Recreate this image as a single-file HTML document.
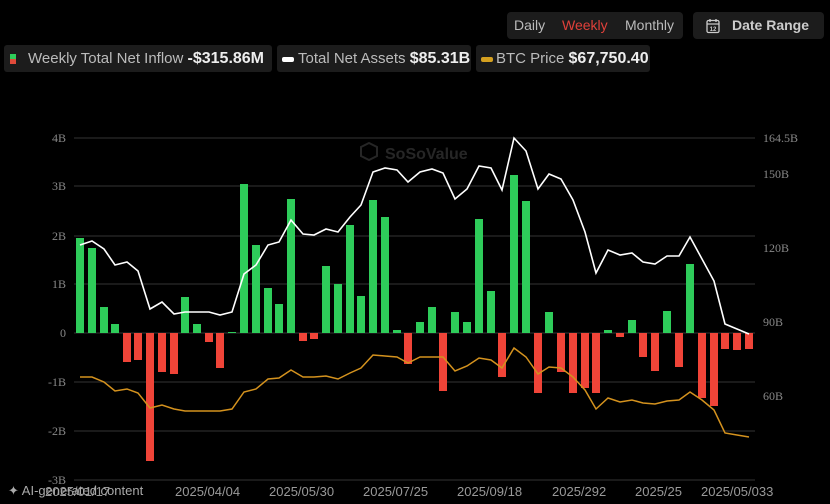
<!DOCTYPE html>
<html><head><meta charset="utf-8"><style>
body{margin:0;width:830px;height:504px;background:#000;overflow:hidden;font-family:"Liberation Sans",sans-serif;position:relative}
.grp{position:absolute;top:12px;left:507px;width:176px;height:27px;background:#1c1c1c;border-radius:4px;font-size:14px;color:#bbb;line-height:27px}
.grp span{position:absolute}
.dr{position:absolute;top:12px;left:693px;width:131px;height:27px;background:#1c1c1c;border-radius:4px;font-size:14px;color:#ccc;line-height:27px;font-weight:bold}
.lg{position:absolute;top:45px;height:27px;background:#1c1c1c;border-radius:3px;color:#bbb;line-height:27px;white-space:nowrap}
.lg .t{position:absolute;font-size:15px}
.lg b{color:#eee;font-size:16px}
</style></head><body>
<div class="grp"><span style="left:7px">Daily</span><span style="left:55px;color:#e0403a">Weekly</span><span style="left:118px">Monthly</span></div>
<div class="dr"><svg style="position:absolute;left:13px;top:6px" width="14" height="16" viewBox="0 0 14 16"><rect x="1" y="2.5" width="12" height="12" rx="1.5" fill="none" stroke="#ccc" stroke-width="1.3"/><line x1="1" y1="6" x2="13" y2="6" stroke="#ccc" stroke-width="1.2"/><line x1="4" y1="1" x2="4" y2="4" stroke="#ccc" stroke-width="1.3"/><line x1="10" y1="1" x2="10" y2="4" stroke="#ccc" stroke-width="1.3"/><text x="7" y="13" font-size="6" fill="#ccc" text-anchor="middle" font-family="Liberation Sans">12</text></svg><span style="position:absolute;left:39px">Date Range</span></div>
<div class="lg" style="left:4px;width:268px"><span style="position:absolute;left:6px;top:9px;width:6px;height:5px;background:#2ecc5a"></span><span style="position:absolute;left:6px;top:14px;width:6px;height:5px;background:#e04a3a"></span><span class="t" style="left:24px">Weekly Total Net Inflow <b>-$315.86M</b></span></div>
<div class="lg" style="left:277px;width:194px"><span style="position:absolute;left:5px;top:12px;width:12px;height:5px;border-radius:2px;background:#fff"></span><span class="t" style="left:21px">Total Net Assets <b>$85.31B</b></span></div>
<div class="lg" style="left:476px;width:174px"><span style="position:absolute;left:5px;top:12px;width:12px;height:5px;border-radius:2px;background:#d4a020"></span><span class="t" style="left:20px">BTC Price <b>$67,750.40</b></span></div>

<svg style="position:absolute;left:0;top:0" width="830" height="504">
<g stroke="#333" stroke-width="1">
<line x1="74" y1="138" x2="755" y2="138"/><line x1="74" y1="186" x2="755" y2="186"/><line x1="74" y1="236" x2="755" y2="236"/><line x1="74" y1="284" x2="755" y2="284"/><line x1="74" y1="333" x2="755" y2="333"/><line x1="74" y1="382" x2="755" y2="382"/><line x1="74" y1="431" x2="755" y2="431"/><line x1="74" y1="480" x2="755" y2="480"/>
</g>
<g font-family="Liberation Serif" font-size="12" fill="#888" text-anchor="end">
<text x="66" y="142">4B</text><text x="66" y="190">3B</text><text x="66" y="240">2B</text><text x="66" y="288">1B</text><text x="66" y="337">0</text><text x="66" y="386">-1B</text><text x="66" y="435">-2B</text><text x="66" y="484">-3B</text>
</g>
<g font-family="Liberation Serif" font-size="12" fill="#888">
<text x="763" y="142">164.5B</text><text x="763" y="178">150B</text><text x="763" y="252">120B</text><text x="763" y="326">90B</text><text x="763" y="400">60B</text>
</g>
<g opacity="0.25"><path d="M361 147l8-4 8 4v9l-8 4-8-4z" fill="none" stroke="#999" stroke-width="2"/><text x="385" y="159" font-size="16" font-weight="bold" fill="#999" font-family="Liberation Sans">SoSoValue</text></g>
<g fill="#2ecc5a">
<rect x="76" y="238" width="8" height="95"/><rect x="88" y="248" width="8" height="85"/><rect x="100" y="307" width="8" height="26"/><rect x="111" y="324" width="8" height="9"/>
<rect x="181" y="297" width="8" height="36"/><rect x="193" y="324" width="8" height="9"/><rect x="228" y="332" width="8" height="1"/>
<rect x="240" y="184" width="8" height="149"/><rect x="252" y="245" width="8" height="88"/><rect x="264" y="288" width="8" height="45"/><rect x="275" y="304" width="8" height="29"/><rect x="287" y="199" width="8" height="134"/>
<rect x="322" y="266" width="8" height="67"/><rect x="334" y="284" width="8" height="49"/><rect x="346" y="225" width="8" height="108"/><rect x="357" y="296" width="8" height="37"/><rect x="369" y="200" width="8" height="133"/><rect x="381" y="217" width="8" height="116"/><rect x="393" y="330" width="8" height="3"/>
<rect x="416" y="322" width="8" height="11"/><rect x="428" y="307" width="8" height="26"/><rect x="451" y="312" width="8" height="21"/><rect x="463" y="322" width="8" height="11"/><rect x="475" y="219" width="8" height="114"/><rect x="487" y="291" width="8" height="42"/>
<rect x="510" y="175" width="8" height="158"/><rect x="522" y="201" width="8" height="132"/><rect x="545" y="312" width="8" height="21"/><rect x="604" y="330" width="8" height="3"/><rect x="628" y="320" width="8" height="13"/><rect x="663" y="311" width="8" height="22"/><rect x="686" y="264" width="8" height="69"/>
</g>
<g fill="#f04438">
<rect x="123" y="333" width="8" height="29"/><rect x="134" y="333" width="8" height="27"/><rect x="146" y="333" width="8" height="128"/><rect x="158" y="333" width="8" height="39"/><rect x="170" y="333" width="8" height="41"/>
<rect x="205" y="333" width="8" height="9"/><rect x="216" y="333" width="8" height="35"/><rect x="299" y="333" width="8" height="8"/><rect x="310" y="333" width="8" height="6"/>
<rect x="404" y="333" width="8" height="31"/><rect x="439" y="333" width="8" height="58"/><rect x="498" y="333" width="8" height="44"/><rect x="534" y="333" width="8" height="60"/>
<rect x="557" y="333" width="8" height="39"/><rect x="569" y="333" width="8" height="60"/><rect x="581" y="333" width="8" height="55"/><rect x="592" y="333" width="8" height="60"/>
<rect x="616" y="333" width="8" height="4"/><rect x="639" y="333" width="8" height="24"/><rect x="651" y="333" width="8" height="38"/><rect x="675" y="333" width="8" height="34"/>
<rect x="698" y="333" width="8" height="65"/><rect x="710" y="333" width="8" height="73"/><rect x="721" y="333" width="8" height="16"/><rect x="733" y="333" width="8" height="17"/><rect x="745" y="333" width="8" height="16"/>
</g>
<polyline fill="none" stroke="#d4921e" stroke-width="1.5" points="80,377 92,377 104,382 115,391 127,389 138,393 150,408 162,405 174,409 185,411 197,411 209,411 220,411 232,409 244,392 256,389 268,379 279,378 291,370 303,377 314,377 326,376 338,379 350,373 361,368 373,355 385,356 397,357 408,363 420,357 432,357 443,357 455,371 467,366 479,358 491,360 502,368 514,348 526,357 538,374 549,367 561,368 573,377 585,390 596,409 608,398 620,402 632,400 643,403 655,404 667,401 679,400 690,392 702,400 714,410 725,433 737,435 749,437"/>
<polyline fill="none" stroke="#fff" stroke-width="1.6" points="80,245 92,241 104,249 115,265 127,262 138,271 150,309 162,302 174,314 185,312 197,312 209,312 220,315 232,312 244,274 256,265 268,245 279,242 291,220 303,234 314,235 326,229 338,232 350,217 361,205 373,172 385,168 397,170 408,182 420,172 432,169 443,173 455,199 467,189 479,166 491,168 502,190 514,138 526,151 538,189 549,174 561,179 573,200 585,232 596,273 608,250 620,255 632,253 643,262 655,264 667,256 679,256 690,237 702,259 714,281 725,324 737,329 749,334"/>
<g font-family="Liberation Sans" font-size="13" fill="#999">
<text x="45" y="496">2025/01/17</text><text x="175" y="496">2025/04/04</text><text x="269" y="496">2025/05/30</text><text x="363" y="496">2025/07/25</text><text x="457" y="496">2025/09/18</text><text x="552" y="496">2025/292</text><text x="635" y="496">2025/25</text><text x="701" y="496">2025/05/033</text>
</g>
<text x="8" y="495" font-family="Liberation Sans" font-size="13" fill="#aaa">✦ AI-generated content</text>
</svg>
</body></html>
